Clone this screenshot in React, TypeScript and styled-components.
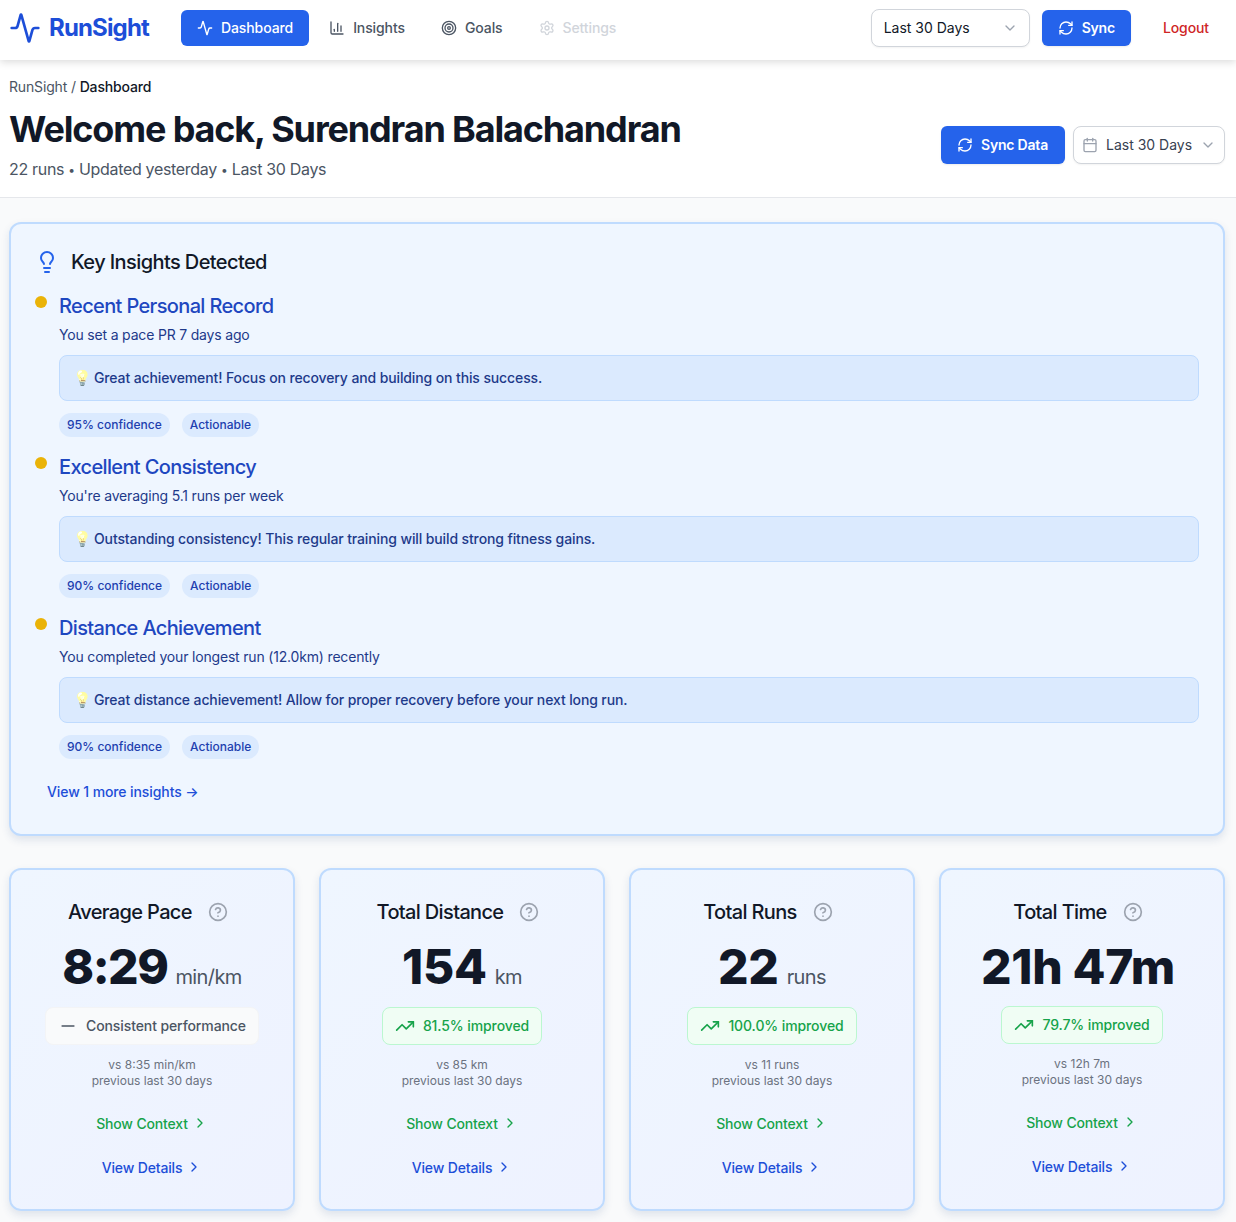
import React from "react";
import styled, { createGlobalStyle } from "styled-components";
import {
  Activity,
  Calendar,
  ChartColumn,
  ChevronDown,
  ChevronRight,
  CircleHelp,
  Lightbulb,
  Minus,
  RefreshCw,
  Settings,
  Target,
  TrendingUp,
} from "lucide-react";

const GlobalStyle = createGlobalStyle`
  * { box-sizing: border-box; }
  html, body { margin: 0; padding: 0; background: #f9fafb; }
  body {
    font-family: Inter, "Liberation Sans", "Noto Color Emoji", sans-serif;
    color: #111827;
  }
  button { font-family: inherit; }
`;

const Nav = styled.nav`
  height: 60px;
  padding: 0 11px 4px 9px;
  background: #fff;
  display: flex;
  align-items: center;
  box-shadow: 0 2px 8px rgba(0, 0, 0, 0.15);
  position: relative;
`;

const Logo = styled.div`
  display: flex;
  align-items: center;
  gap: 8px;
  width: 172px;
  color: #1d4ed8;
  font-size: 24px;
  line-height: 32px;
  font-weight: 700;
  letter-spacing: -0.85px;
`;

const NavLinks = styled.div`
  display: flex;
  gap: 4px;
  flex: 1;
`;

const NavLink = styled.a<{ $active?: boolean; $disabled?: boolean }>`
  height: 36px;
  padding: 0 16px 1px;
  display: flex;
  align-items: center;
  gap: 8px;
  border-radius: 6px;
  font-size: 14px;
  font-weight: 500;
  letter-spacing: -0.1px;
  background: ${(p) => (p.$active ? "#2563eb" : "transparent")};
  color: ${(p) => (p.$active ? "#fff" : p.$disabled ? "#d1d5db" : "#4b5563")};
`;

const PrimaryButton = styled.button<{ $tall?: boolean }>`
  height: ${(p) => (p.$tall ? "38px" : "36px")};
  padding: 0 ${(p) => (p.$tall ? "17px" : "16px")} 1px 16px;
  border: 0;
  border-radius: 6px;
  background: #2563eb;
  color: #fff;
  display: flex;
  align-items: center;
  gap: 8px;
  font-size: 14px;
  font-weight: 600;
  letter-spacing: -0.2px;
  box-shadow: 0 1px 2px rgba(0, 0, 0, 0.08);
`;

const SelectBox = styled.div<{ $width: number; $compact?: boolean }>`
  width: ${(p) => p.$width}px;
  height: 38px;
  padding: 0 ${(p) => (p.$compact ? "8px" : "11px")} 1px ${(p) => (p.$compact ? "8px" : "12px")};
  border: 1px solid #d1d5db;
  border-radius: 8px;
  background: #fff;
  display: flex;
  align-items: center;
  gap: 8px;
  font-size: 14px;
  white-space: nowrap;
  color: ${(p) => (p.$compact ? "#374151" : "#111827")};
  box-shadow: 0 1px 2px rgba(0, 0, 0, 0.05);
  span { flex: 1; }
  svg { color: #9ca3af; flex: none; }
`;

const NavRight = styled.div`
  display: flex;
  align-items: center;
  gap: 12px;
`;

const Logout = styled.a`
  margin-left: 4px;
  padding: 0 16px 1px;
  color: #cf2626;
  font-size: 14px;
  font-weight: 500;
  letter-spacing: -0.1px;
`;

const Header = styled.header`
  padding: 17px 11px 16px 9px;
  background: #fff;
  border-bottom: 1px solid #e5e7eb;
  display: flex;
  align-items: flex-end;
  justify-content: space-between;
`;

const Breadcrumb = styled.div`
  font-size: 14px;
  line-height: 20px;
  letter-spacing: -0.15px;
  color: #4b5563;
  margin-bottom: 12px;
  b { font-weight: 500; color: #111827; }
`;

const Title = styled.h1`
  margin: 0 0 8px;
  font-size: 36px;
  line-height: 40px;
  font-weight: 700;
  letter-spacing: -1.15px;
  color: #111827;
`;

const Subtitle = styled.div`
  font-size: 16px;
  line-height: 24px;
  letter-spacing: -0.32px;
  color: #4b5563;
`;

const Sep = styled.span`
  font-size: 12px;
  line-height: 0;
  vertical-align: 1px;
`;

const HeaderActions = styled.div`
  display: flex;
  gap: 8px;
  margin-bottom: 17px;
`;

const Main = styled.main`
  padding: 24px 11px 11px 9px;
  display: flex;
  flex-direction: column;
  gap: 32px;
`;

const InsightsCard = styled.section`
  padding: 24px;
  border: 2px solid #bfdbfe;
  border-radius: 12px;
  background: #eff6ff;
  box-shadow: 0 4px 8px rgba(30, 64, 120, 0.12);
`;

const InsightsHeading = styled.h2`
  margin: 0 0 16px;
  display: flex;
  align-items: center;
  gap: 12px;
  font-size: 20px;
  line-height: 28px;
  font-weight: 550;
  letter-spacing: -0.6px;
  color: #111827;
  svg { color: #2563eb; }
`;

const InsightList = styled.div`
  display: flex;
  flex-direction: column;
  gap: 16px;
`;

const Insight = styled.article`
  display: flex;
  gap: 12px;
`;

const Dot = styled.span`
  flex: none;
  width: 12px;
  height: 12px;
  margin-top: 4px;
  border-radius: 50%;
  background: #eab308;
`;

const InsightBody = styled.div`
  flex: 1;
`;

const InsightTitle = styled.h3`
  margin: 0 0 5px;
  font-size: 20px;
  line-height: 28px;
  font-weight: 550;
  letter-spacing: -0.64px;
  color: #1e47c0;
`;

const InsightText = styled.p`
  margin: 0 0 10px;
  font-size: 14px;
  line-height: 20px;
  letter-spacing: -0.18px;
  color: #1e3a8a;
`;

const Tip = styled.div`
  height: 46px;
  padding: 0 12px 2px;
  border: 1px solid #bfdbfe;
  border-radius: 8px;
  background: #dbeafe;
  display: flex;
  align-items: center;
  font-size: 14px;
  font-weight: 500;
  letter-spacing: -0.12px;
  color: #1e3a8a;
`;

const TipBulb = styled.span`
  width: 22px;
  flex: none;
  text-align: center;
  font-size: 15px;
  letter-spacing: 0;
  filter: saturate(0.35) brightness(1.2);
`;

const Tags = styled.div`
  margin-top: 12px;
  display: flex;
  gap: 12px;
`;

const Tag = styled.span`
  height: 24px;
  padding: 0 8px 1px;
  border-radius: 12px;
  background: #dbeafe;
  display: flex;
  align-items: center;
  font-size: 12px;
  font-weight: 500;
  color: #1e40af;
`;

const MoreLink = styled.a`
  margin-top: 15px;
  height: 36px;
  padding: 0 12px 1px;
  display: inline-flex;
  align-items: center;
  font-size: 14px;
  font-weight: 500;
  letter-spacing: -0.1px;
  color: #1d4ed8;
`;

const MetricGrid = styled.div`
  display: grid;
  grid-template-columns: repeat(4, 1fr);
  gap: 24px;
`;

const MetricCard = styled.article`
  padding: 28px 24px 24px;
  border: 2px solid #bfdbfe;
  border-radius: 12px;
  background: linear-gradient(135deg, #eff6ff, #eef2ff);
  box-shadow: 0 4px 8px rgba(30, 64, 120, 0.12);
  display: flex;
  flex-direction: column;
  align-items: center;
`;

const MetricTitle = styled.div`
  margin-right: 8px;
  display: flex;
  align-items: center;
  gap: 16px;
  font-size: 20px;
  line-height: 28px;
  font-weight: 550;
  letter-spacing: -0.65px;
  color: #111827;
  svg { color: #9ca3af; }
`;

const MetricValue = styled.div<{ $tracking: number }>`
  margin: 17px 0 15px;
  font-size: 48px;
  line-height: 48px;
  font-weight: 800;
  letter-spacing: ${(p) => p.$tracking}px;
  white-space: nowrap;
  color: #111827;
`;

const MetricUnit = styled.span`
  margin-left: 8px;
  font-size: 20px;
  line-height: 30px;
  font-weight: 400;
  letter-spacing: -0.6px;
  color: #4b5563;
  &:empty { line-height: 0; }
`;

const Trend = styled.div<{ $good?: boolean }>`
  height: 38px;
  padding: 0 12px 1px;
  border: 1px solid ${(p) => (p.$good ? "#bbf7d0" : "#f3f4f6")};
  border-radius: 8px;
  background: ${(p) => (p.$good ? "#f0fdf4" : "#f9fafb")};
  display: flex;
  align-items: center;
  gap: 8px;
  font-size: 14px;
  font-weight: 500;
  letter-spacing: -0.1px;
  color: ${(p) => (p.$good ? "#16a34a" : "#4b5563")};
`;

const Compare = styled.div`
  margin: 12px 0 16px;
  text-align: center;
  font-size: 12px;
  line-height: 16px;
  color: #6b7280;
`;

const LinkButton = styled.a<{ $tone: string }>`
  height: 36px;
  display: flex;
  align-items: center;
  gap: 4px;
  font-size: 14px;
  font-weight: 500;
  letter-spacing: -0.15px;
  color: ${(p) => p.$tone};
  & + & { margin-top: 8px; }
`;

const insights = [
  {
    title: "Recent Personal Record",
    text: "You set a pace PR 7 days ago",
    tip: "Great achievement! Focus on recovery and building on this success.",
    confidence: "95% confidence",
  },
  {
    title: "Excellent Consistency",
    text: "You're averaging 5.1 runs per week",
    tip: "Outstanding consistency! This regular training will build strong fitness gains.",
    confidence: "90% confidence",
  },
  {
    title: "Distance Achievement",
    text: "You completed your longest run (12.0km) recently",
    tip: "Great distance achievement! Allow for proper recovery before your next long run.",
    confidence: "90% confidence",
  },
];

const metrics = [
  { title: "Average Pace", value: "8:29", unit: "min/km", tracking: -1.5, trend: "Consistent performance", good: false, vs: "vs 8:35 min/km" },
  { title: "Total Distance", value: "154", unit: "km", tracking: -0.3, trend: "81.5% improved", good: true, vs: "vs 85 km" },
  { title: "Total Runs", value: "22", unit: "runs", tracking: -0.3, trend: "100.0% improved", good: true, vs: "vs 11 runs" },
  { title: "Total Time", value: "21h 47m", unit: "", tracking: -0.3, trend: "79.7% improved", good: true, vs: "vs 12h 7m" },
];

const App = () => {
  return (
    <>
      <GlobalStyle />
      <Nav>
        <Logo>
          <Activity size={32} strokeWidth={2} />
          RunSight
        </Logo>
        <NavLinks>
          <NavLink $active>
            <Activity size={16} />
            Dashboard
          </NavLink>
          <NavLink>
            <ChartColumn size={16} />
            Insights
          </NavLink>
          <NavLink>
            <Target size={16} />
            Goals
          </NavLink>
          <NavLink $disabled>
            <Settings size={16} />
            Settings
          </NavLink>
        </NavLinks>
        <NavRight>
          <SelectBox $width={159}>
            <span>Last 30 Days</span>
            <ChevronDown size={16} />
          </SelectBox>
          <PrimaryButton>
            <RefreshCw size={16} />
            Sync
          </PrimaryButton>
          <Logout>Logout</Logout>
        </NavRight>
      </Nav>
      <Header>
        <div>
          <Breadcrumb>
            RunSight / <b>Dashboard</b>
          </Breadcrumb>
          <Title>Welcome back, Surendran Balachandran</Title>
          <Subtitle>
            22 runs <Sep>•</Sep> Updated yesterday <Sep>•</Sep> Last 30 Days
          </Subtitle>
        </div>
        <HeaderActions>
          <PrimaryButton $tall>
            <RefreshCw size={16} />
            Sync Data
          </PrimaryButton>
          <SelectBox $width={152} $compact>
            <Calendar size={16} />
            <span>Last 30 Days</span>
            <ChevronDown size={16} />
          </SelectBox>
        </HeaderActions>
      </Header>
      <Main>
        <InsightsCard>
          <InsightsHeading>
            <Lightbulb size={24} />
            Key Insights Detected
          </InsightsHeading>
          <InsightList>
            {insights.map((item) => (
              <Insight key={item.title}>
                <Dot />
                <InsightBody>
                  <InsightTitle>{item.title}</InsightTitle>
                  <InsightText>{item.text}</InsightText>
                  <Tip>
                    <TipBulb>💡</TipBulb>
                    {item.tip}
                  </Tip>
                  <Tags>
                    <Tag>{item.confidence}</Tag>
                    <Tag>Actionable</Tag>
                  </Tags>
                </InsightBody>
              </Insight>
            ))}
          </InsightList>
          <MoreLink>View 1 more insights →</MoreLink>
        </InsightsCard>
        <MetricGrid>
          {metrics.map((m) => (
            <MetricCard key={m.title}>
              <MetricTitle>
                {m.title}
                <CircleHelp size={20} />
              </MetricTitle>
              <MetricValue $tracking={m.tracking}>
                {m.value}
                <MetricUnit>{m.unit}</MetricUnit>
              </MetricValue>
              <Trend $good={m.good}>
                {m.good ? <TrendingUp size={20} /> : <Minus size={20} />}
                {m.trend}
              </Trend>
              <Compare>
                {m.vs}
                <br />
                previous last 30 days
              </Compare>
              <LinkButton $tone="#16a34a">
                Show Context
                <ChevronRight size={16} />
              </LinkButton>
              <LinkButton $tone="#1d4ed8">
                View Details
                <ChevronRight size={16} />
              </LinkButton>
            </MetricCard>
          ))}
        </MetricGrid>
      </Main>
    </>
  );
};

export default App;
